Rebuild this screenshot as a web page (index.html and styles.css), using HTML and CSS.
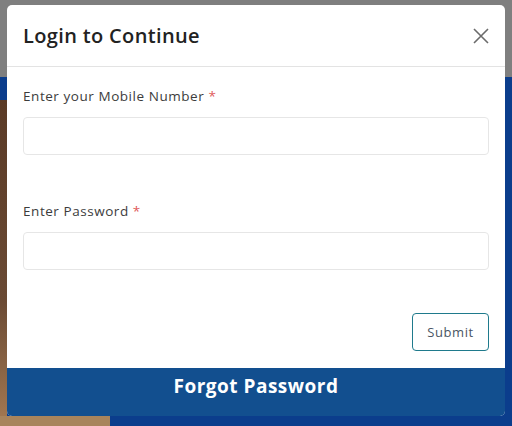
FILE: index.html
```html
<!DOCTYPE html>
<html lang="en">
<head>
    <meta charset="UTF-8">
    <meta name="viewport" content="width=device-width, initial-scale=1.0">
    <title>Login to Continue</title>
    <link rel="stylesheet" href="styles.css">
</head>
<body>
    <div class="backdrop">
        <div class="modal">
            <div class="modal-header">
                <h2>Login to Continue</h2>
                <button class="close" aria-label="Close">
                    <svg width="16" height="16" viewBox="0 0 16 16">
                        <path d="M1 1 L15 15 M15 1 L1 15" stroke="#6b6b6b" stroke-width="1.6" fill="none"/>
                    </svg>
                </button>
            </div>
            <form class="modal-body">
                <div class="form-group">
                    <label for="mobile">Enter your Mobile Number <span class="req">*</span></label>
                    <input type="text" id="mobile" name="mobile">
                </div>
                <div class="form-group">
                    <label for="password">Enter Password <span class="req">*</span></label>
                    <input type="password" id="password" name="password">
                </div>
                <div class="actions">
                    <button type="submit" class="submit">Submit</button>
                </div>
            </form>
            <div class="modal-footer">Forgot Password</div>
        </div>
    </div>
</body>
</html>
```

FILE: styles.css
```css
/* Page behind the modal */
html, body {
    margin: 0;
    padding: 0;
}

body {
    font-family: 'Open Sans', 'Liberation Sans', sans-serif;
    width: 512px;
    height: 426px;
    overflow: hidden;
    background:
        linear-gradient(to bottom, transparent 0, transparent 100px, #5a3a26 100px, #6a4a34 300px, #a07650 416px, transparent 416px) left top / 7px 100% no-repeat,
        linear-gradient(to right, #a8845c 0, #a8845c 110px, transparent 110px) left bottom / 100% 10px no-repeat,
        linear-gradient(to bottom, #7f7f7f 0, #7f7f7f 77px, #0b3d8c 77px);
}

.backdrop {
    padding: 5px 7px;
}

/* Modal */
.modal {
    width: 498px;
    height: 411px;
    background: #fff;
    border-radius: 5px;
    overflow: hidden;
    display: flex;
    flex-direction: column;
}

.modal-header {
    display: flex;
    align-items: center;
    justify-content: space-between;
    height: 61px;
    padding: 0 16px;
    border-bottom: 1px solid #e3e3e3;
}

.modal-header h2 {
    margin: 0;
    font-size: 20px;
    font-weight: 600;
    color: #222;
    letter-spacing: 0.35px;
}

.close {
    background: none;
    border: none;
    padding: 0;
    display: flex;
}

.modal-body {
    flex: 1;
    padding: 19px 16px 0;
}

.form-group {
    margin-bottom: 46px;
}

.form-group label {
    display: block;
    font-size: 13.5px;
    color: #3c3c3c;
    margin-bottom: 11px;
    line-height: 20px;
    letter-spacing: 0.55px;
}

.req {
    color: #e05a5a;
}

.form-group input {
    display: block;
    box-sizing: border-box;
    width: 100%;
    height: 38px;
    border: 1px solid #e6e6e6;
    border-radius: 4px;
    outline: none;
}

.actions {
    display: flex;
    justify-content: flex-end;
    margin-top: -3px;
}

.submit {
    width: 77px;
    height: 38px;
    background: #fff;
    border: 1px solid #1f7a8c;
    border-radius: 4px;
    font-family: 'Open Sans', 'Liberation Sans', sans-serif;
    font-size: 13px;
    letter-spacing: 0.6px;
    color: #4a5563;
}

.modal-footer {
    height: 48px;
    background: #124f8f;
    color: #fff;
    font-size: 19px;
    font-weight: 700;
    letter-spacing: 0.5px;
    text-align: center;
    line-height: 36px;
}
```
